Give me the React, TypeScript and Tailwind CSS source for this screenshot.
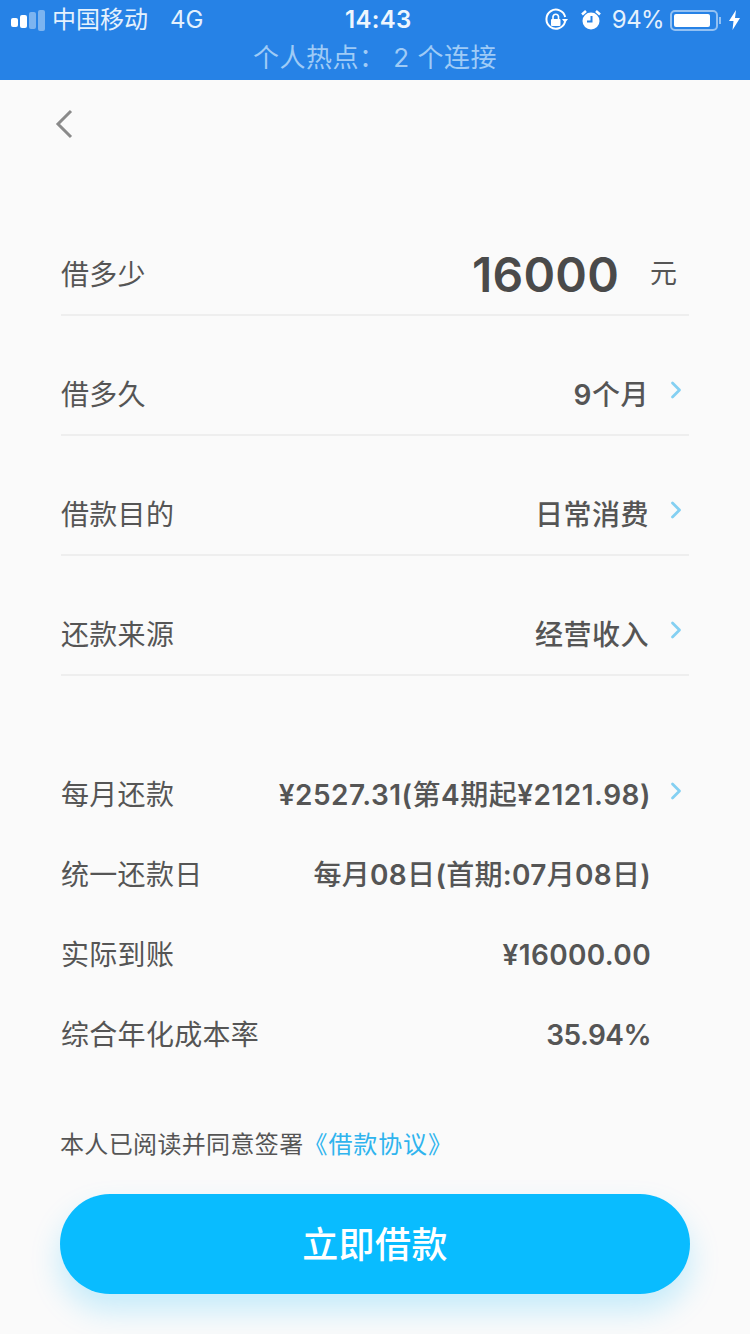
import { ChevronRight } from 'lucide-react';

const cjk = "font-['Inter','Noto_Sans_CJK_SC',sans-serif]";

function StatusBar() {
  return (
    <div className="h-20 bg-[#2682e6] text-white">
      <div className="relative flex h-10 items-center justify-between pl-[11px] pr-2.5">
        <div className="flex items-center">
          <div className="flex items-center gap-[2px]">
            <span className="mt-[4px] h-[9px] w-[7px] rounded-[2px] bg-white" />
            <span className="mt-[2px] h-[13px] w-[7px] rounded-[2px] bg-white" />
            <span className="h-[17px] w-[7px] rounded-[2px] bg-white/40" />
            <span className="h-[21px] w-[7px] rounded-[2px] bg-white/40" />
          </div>
          <span className="ml-[7px] text-[24px] leading-none text-[#e4f1fd]">中国移动</span>
          <span className="ml-[22px] text-[24px] leading-none text-[#e4f1fd]">4G</span>
        </div>
        <span className="absolute left-[345px] top-[8px] text-[24px] font-semibold leading-none tracking-[0.3px] text-[#eef6fe]">14:43</span>
        <div className="flex items-center">
          <svg width="24" height="24" viewBox="0 0 24 24" fill="none">
            <path d="M21 14a9.5 9.5 0 1 1 .2-5" stroke="white" strokeWidth="2" />
            <path d="M18 11h6l-3 4z" fill="white" />
            <rect x="7" y="11" width="9.5" height="7" rx="1" fill="white" />
            <path d="M9 11V8.5a2.8 2.8 0 0 1 5.5 0V11" stroke="white" strokeWidth="1.6" />
          </svg>
          <svg className="ml-[11px]" width="24" height="24" viewBox="0 0 24 24" fill="none">
            <circle cx="12" cy="13" r="8.5" fill="white" />
            <path d="M12.5 8v5.5H8" stroke="#2682e6" strokeWidth="2" />
            <path d="M3 6.5 7 3M21 6.5 17 3" stroke="white" strokeWidth="2.6" />
          </svg>
          <span className="ml-[9px] text-[24px] leading-none tracking-[-0.6px] text-[#e4f1fd]">94%</span>
          <div className="ml-[6px] h-[21px] w-[48px] rounded-[5px] border-2 border-white/50 p-[2px]">
            <div className="h-full w-[90%] rounded-[2px] bg-white" />
          </div>
          <span className="ml-[1px] h-[7px] w-[2px] bg-white/50" />
          <svg className="ml-[8px]" width="11" height="20" viewBox="0 0 11 20">
            <path d="M7 0 0 11h4.5L3.5 20 11 8H6z" fill="white" />
          </svg>
        </div>
      </div>
      <div className="flex h-10 items-start justify-center text-[26px] leading-[36px] tracking-[0.5px] text-[#9fcbf6]">
        个人热点： 2 个连接
      </div>
    </div>
  );
}

function FormRow({ label, children }: { label: string; children: React.ReactNode }) {
  return (
    <div className="mx-px flex h-[120px] items-center justify-between border-b-2 border-[#eeeeee] pt-[39px]">
      <span className="text-[28px] tracking-[0.3px] text-[#555555]">{label}</span>
      <div className="-mr-px">{children}</div>
    </div>
  );
}

function Arrow() {
  return <ChevronRight className="mb-[9px] ml-[11px] text-[#84d0f2]" size={28} strokeWidth={2.4} />;
}

function Value({ text, arrow = true, spacing = 'tracking-[0.5px]' }: { text: string; arrow?: boolean; spacing?: string }) {
  // digits read heavier than the chinese in the design
  const parts = text.split(/([¥0-9.():%]+)/);
  return (
    <div className="flex items-center">
      <span className={`text-[28px] font-medium text-[#555555] ${spacing}`}>
        {parts.map((part, i) => (i % 2 === 1 ? <span key={i} className="font-semibold">{part}</span> : part))}
      </span>
      {arrow ? <Arrow /> : <span className="w-[39px]" />}
    </div>
  );
}

function InfoRow({ label, text, arrow = false, spacing }: { label: string; text: string; arrow?: boolean; spacing?: string }) {
  return (
    <div className="flex h-20 items-center justify-between pt-[2px]">
      <span className="pl-px text-[28px] tracking-[0.3px] text-[#555555]">{label}</span>
      <Value text={text} arrow={arrow} spacing={spacing} />
    </div>
  );
}

export default function App() {
  return (
    <div className={`min-h-[1334px] w-[750px] overflow-hidden bg-[#fafafa] ${cjk}`}>
      <StatusBar />
      <div className="px-[60px]">
        <div className="h-[116px] pt-[26px]">
          <svg className="-ml-[8px]" width="24" height="36" viewBox="0 0 24 36" fill="none">
            <path d="M19 5 6 18l13 13" stroke="#8a8a8a" strokeWidth="3" />
          </svg>
        </div>
        <FormRow label="借多少">
          <div className="flex items-center">
            <span className="text-[48px] font-semibold leading-none tracking-[0.2px] text-[#4a4a4a]">16000</span>
            <span className="ml-[31px] mr-[13px] text-[27px] text-[#555555]">元</span>
          </div>
        </FormRow>
        <FormRow label="借多久"><Value text="9个月" spacing="pr-[2px] tracking-[0.5px]" /></FormRow>
        <FormRow label="借款目的"><Value text="日常消费" spacing="pr-[2px] tracking-[0.5px]" /></FormRow>
        <FormRow label="还款来源"><Value text="经营收入" spacing="pr-[2px] tracking-[0.5px]" /></FormRow>
        <div className="mt-[78px]">
          <InfoRow label="每月还款" text="¥2527.31(第4期起¥2121.98)" arrow />
          <InfoRow label="统一还款日" text="每月08日(首期:07月08日)" spacing="tracking-[0.3px]" />
          <InfoRow label="实际到账" text="¥16000.00" spacing="tracking-[0.35px]" />
          <InfoRow label="综合年化成本率" text="35.94%" spacing="tracking-[-0.55px]" />
        </div>
        <div className="mt-[51px] flex h-[40px] items-center text-[24px] tracking-[0.35px] text-[#555555]">
          本人已阅读并同意签署<span className="tracking-[0.9px] text-[#2fb4ee]">《借款协议》</span>
        </div>
        <button className="mt-[29px] flex h-[100px] w-[630px] items-center justify-center rounded-full bg-[#09bcff] pt-[1px] text-[36px] font-medium tracking-[0.4px] text-white shadow-[0_16px_30px_rgba(9,188,255,0.22)]">
          立即借款
        </button>
      </div>
    </div>
  );
}
